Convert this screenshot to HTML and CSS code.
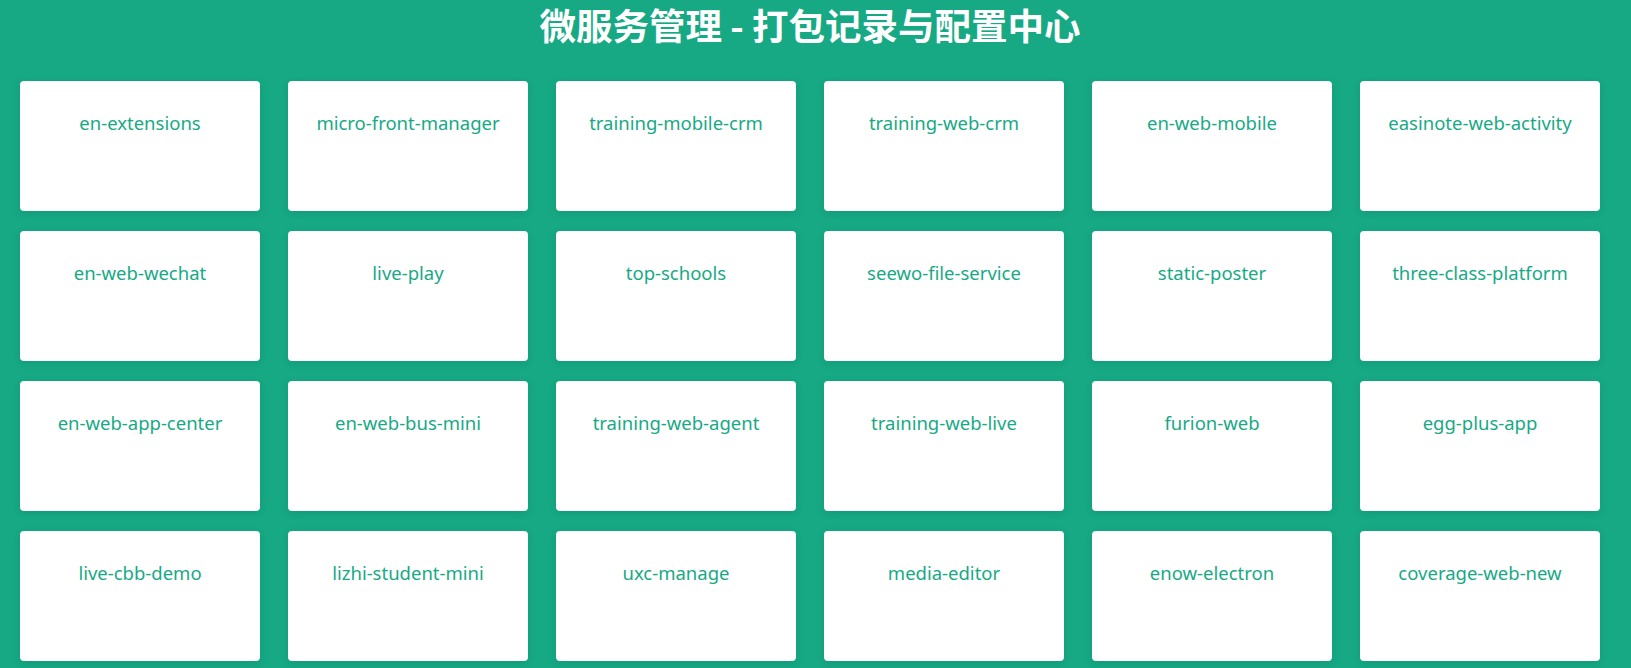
FILE: index.html
```html
<!DOCTYPE html>
<html lang="zh-CN">
<head>
<meta charset="utf-8">
<title>微服务管理 - 打包记录与配置中心</title>
<link rel="stylesheet" href="styles.css">
</head>
<body>
<div class="page">
  <h1 class="title">微服务管理 - 打包记录与配置中心</h1>
  <div class="grid">
    <div class="card"><span class="name">en-extensions</span></div>
    <div class="card"><span class="name">micro-front-manager</span></div>
    <div class="card"><span class="name">training-mobile-crm</span></div>
    <div class="card"><span class="name">training-web-crm</span></div>
    <div class="card"><span class="name">en-web-mobile</span></div>
    <div class="card"><span class="name">easinote-web-activity</span></div>
    <div class="card"><span class="name">en-web-wechat</span></div>
    <div class="card"><span class="name">live-play</span></div>
    <div class="card"><span class="name">top-schools</span></div>
    <div class="card"><span class="name">seewo-file-service</span></div>
    <div class="card"><span class="name">static-poster</span></div>
    <div class="card"><span class="name">three-class-platform</span></div>
    <div class="card"><span class="name">en-web-app-center</span></div>
    <div class="card"><span class="name">en-web-bus-mini</span></div>
    <div class="card"><span class="name">training-web-agent</span></div>
    <div class="card"><span class="name">training-web-live</span></div>
    <div class="card"><span class="name">furion-web</span></div>
    <div class="card"><span class="name">egg-plus-app</span></div>
    <div class="card"><span class="name">live-cbb-demo</span></div>
    <div class="card"><span class="name">lizhi-student-mini</span></div>
    <div class="card"><span class="name">uxc-manage</span></div>
    <div class="card"><span class="name">media-editor</span></div>
    <div class="card"><span class="name">enow-electron</span></div>
    <div class="card"><span class="name">coverage-web-new</span></div>
  </div>
</div>
</body>
</html>
```

FILE: styles.css
```css
html, body {
  margin: 0;
  padding: 0;
  background: #16a984;
}
body {
  font-family: "Noto Sans", "Noto Sans CJK SC", sans-serif;
  min-height: 668px;
}
.page {
  width: 1580px;
  padding: 0 0 20px 20px;
}
.title {
  margin: 0;
  height: 58px;
  line-height: 49px;
  text-align: center;
  color: #ffffff;
  font-size: 36.5px;
  font-weight: 700;
  font-family: "Noto Sans CJK SC", "Noto Sans", sans-serif;
}
.grid {
  margin-top: 23px;
  display: grid;
  grid-template-columns: repeat(6, 240px);
  grid-auto-rows: 130px;
  column-gap: 28px;
  row-gap: 20px;
}
.card {
  background: #ffffff;
  border-radius: 4px;
  box-shadow: 0 2px 8px rgba(0, 0, 0, 0.1);
  text-align: center;
  padding-top: 31px;
  box-sizing: border-box;
}
.name {
  display: block;
  font-size: 18.5px;
  line-height: 22px;
  color: #17a985;
}
```
